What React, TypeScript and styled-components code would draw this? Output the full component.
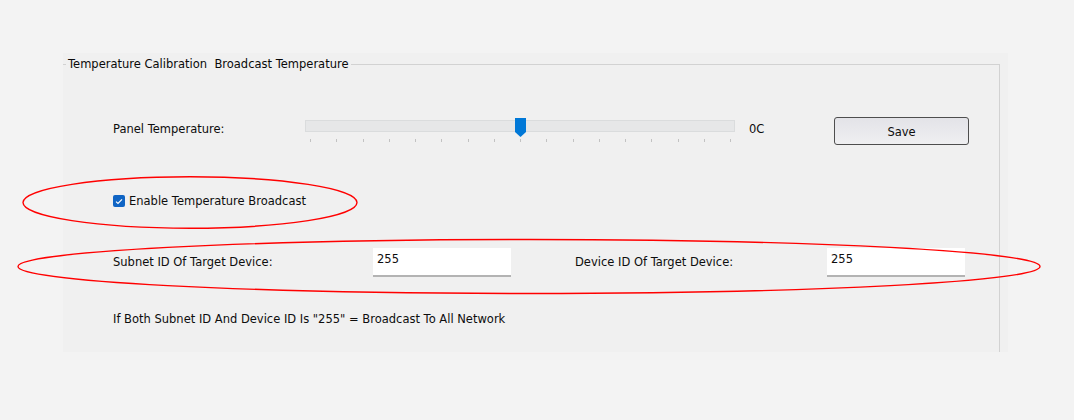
import * as React from "react";
import styled, { createGlobalStyle } from "styled-components";

const GlobalStyle = createGlobalStyle`
  html, body {
    margin: 0;
    padding: 0;
    background: #f3f3f3;
  }
  body {
    font-family: "DejaVu Sans", "Noto Sans", sans-serif;
    font-size: 11.5px;
    color: #0d0d0d;
  }
`;

const Screen = styled.div`
  position: relative;
  width: 1074px;
  height: 420px;
  overflow: hidden;
`;

const Panel = styled.div`
  margin: 53px 0 0 63px;
  width: 945px;
  height: 299px;
  padding-top: 4px;
  box-sizing: border-box;
  background: #f0f0f0;
`;

const GroupBox = styled.fieldset`
  margin: 0;
  padding: 0 0 0 50px;
  width: 937px;
  height: 295px;
  box-sizing: border-box;
  border: 1px solid #d2d2d2;
  border-left: none;
  border-bottom: none;
  min-inline-size: 0;
`;

const Legend = styled.legend`
  margin-left: -47px;
  padding: 0 2px;
  line-height: 14px;
  color: #0a0a0a;
  white-space: pre;
`;

const Row = styled.div<{ $top: number; $height: number }>`
  display: flex;
  align-items: flex-start;
  margin-top: ${(p) => p.$top}px;
  height: ${(p) => p.$height}px;
`;

const Label = styled.span<{ $width?: number; $line: number }>`
  display: block;
  width: ${(p) => (p.$width ? `${p.$width}px` : "auto")};
  flex: none;
  line-height: ${(p) => p.$line}px;
  white-space: nowrap;
`;

const SliderBox = styled.div`
  position: relative;
  width: 430px;
  height: 24px;
  margin-top: 5px;
  flex: none;
`;

const Track = styled.div`
  margin-top: 2px;
  height: 12px;
  box-sizing: border-box;
  background: #e6e7e8;
  border: 1px solid #dadcdd;
`;

const Thumb = styled.svg`
  position: absolute;
  top: 0;
  left: 210px;
`;

const Ticks = styled.div`
  display: flex;
  justify-content: space-between;
  margin-top: 7px;
  padding: 0 4px 0 5px;
`;

const Tick = styled.span`
  width: 1px;
  height: 3px;
  background: #c2c2c2;
`;

const Value = styled.span`
  width: 85px;
  margin-left: 14px;
  line-height: 33px;
  flex: none;
`;

const SaveButton = styled.button`
  width: 135px;
  height: 28px;
  margin-top: 4px;
  flex: none;
  border: 1px solid #4e4e4e;
  border-radius: 3px;
  background: linear-gradient(#e3e3e8, #efeff1);
  font-family: inherit;
  font-size: 11.5px;
  color: #0d0d0d;
  padding: 2px 0 0;
`;

const Check = styled.span`
  display: flex;
  align-items: center;
  justify-content: center;
  width: 12px;
  height: 12px;
  margin: 4px 4px 0 0;
  border-radius: 2px;
  background: #0f64c4;
  flex: none;
`;

const Field = styled.div`
  width: 138px;
  height: 29px;
  box-sizing: border-box;
  padding: 5px 0 0 4px;
  background: #fff;
  border-bottom: 2px solid #b3b3b3;
  line-height: 13px;
  flex: none;
`;

const Spacer = styled.div<{ $width: number }>`
  width: ${(p) => p.$width}px;
  flex: none;
`;

const Overlay = styled.svg`
  position: absolute;
  left: 0;
  top: 0;
  pointer-events: none;
`;

export default function App() {
  const ticks = Array.from({ length: 17 }, (_, i) => i);
  return (
    <>
      <GlobalStyle />
      <Screen>
        <Panel>
          <GroupBox>
            <Legend>Temperature Calibration  Broadcast Temperature</Legend>

            <Row $top={42} $height={36}>
              <Label $width={192} $line={33}>Panel Temperature:</Label>
              <SliderBox>
                <Track />
                <Thumb width="11" height="19" viewBox="0 0 11 19">
                  <path d="M0 0H11V14L5.5 19L0 14Z" fill="#0078d7" />
                </Thumb>
                <Ticks>
                  {ticks.map((i) => (
                    <Tick key={i} />
                  ))}
                </Ticks>
              </SliderBox>
              <Value>0C</Value>
              <SaveButton>Save</SaveButton>
            </Row>

            <Row $top={42} $height={20}>
              <Check>
                <svg width="8" height="7" viewBox="0 0 8 7">
                  <path d="M1 3.6L3 5.5L7 1.3" fill="none" stroke="#fff" strokeWidth="1.2" />
                </svg>
              </Check>
              <Label $line={21}>Enable Temperature Broadcast</Label>
            </Row>

            <Row $top={37} $height={29}>
              <Label $width={260} $line={29}>Subnet ID Of Target Device:</Label>
              <Field>255</Field>
              <Spacer $width={64} />
              <Label $width={252} $line={29}>Device ID Of Target Device:</Label>
              <Field>255</Field>
            </Row>

            <Row $top={32} $height={20}>
              <Label $line={21}>If Both Subnet ID And Device ID Is "255" = Broadcast To All Network</Label>
            </Row>
          </GroupBox>
        </Panel>

        <Overlay width="1074" height="420" viewBox="0 0 1074 420">
          <ellipse cx="190" cy="202.5" rx="167" ry="25.7" fill="none" stroke="#f00" strokeWidth="1.4" />
          <ellipse cx="529" cy="266.5" rx="511" ry="27" fill="none" stroke="#f00" strokeWidth="1.4" />
        </Overlay>
      </Screen>
    </>
  );
}
